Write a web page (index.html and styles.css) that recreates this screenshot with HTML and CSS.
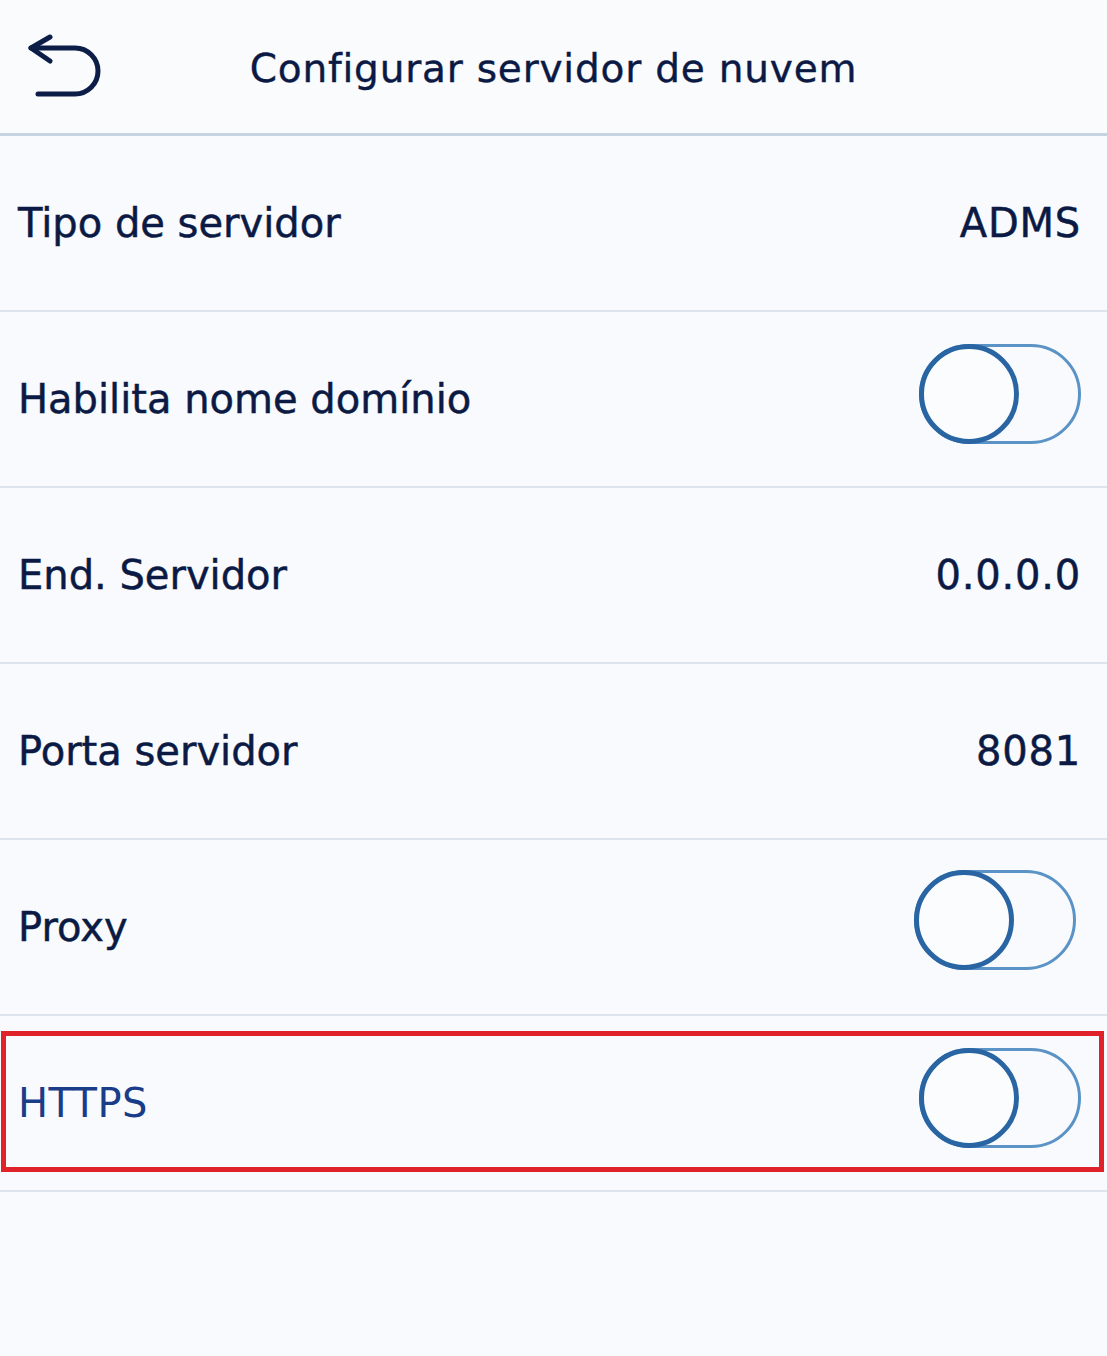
FILE: index.html
```html
<!DOCTYPE html>
<html lang="pt">
<head>
    <meta charset="UTF-8">
    <meta name="viewport" content="width=device-width, initial-scale=1.0">
    <title>Configurar servidor de nuvem</title>
    <link rel="stylesheet" href="styles.css">
</head>
<body>
    <!-- Title bar -->
    <div class="title-bar">
        <div class="back-btn">
            <svg width="74" height="66" viewBox="0 0 74 66">
                <path d="M22 3 L3 14 L22 27" fill="none" stroke="#0c1d48" stroke-width="5" stroke-linecap="round" stroke-linejoin="round"/>
                <path d="M3 14 H47 A23 23 0 0 1 47 60 H10" fill="none" stroke="#0c1d48" stroke-width="5" stroke-linecap="round"/>
            </svg>
        </div>
        <h1 class="title">Configurar servidor de nuvem</h1>
    </div>

    <!-- Settings list -->
    <div class="settings-list">
        <div class="setting-row">
            <span class="label">Tipo de servidor</span>
            <span class="value">ADMS</span>
        </div>
        <div class="setting-row">
            <span class="label">Habilita nome domínio</span>
            <span class="toggle"><span class="knob"></span></span>
        </div>
        <div class="setting-row">
            <span class="label">End. Servidor</span>
            <span class="value">0.0.0.0</span>
        </div>
        <div class="setting-row">
            <span class="label">Porta servidor</span>
            <span class="value">8081</span>
        </div>
        <div class="setting-row">
            <span class="label">Proxy</span>
            <span class="toggle shift-left"><span class="knob"></span></span>
        </div>
        <div class="setting-row highlighted">
            <span class="label light">HTTPS</span>
            <span class="toggle"><span class="knob"></span></span>
        </div>
    </div>
</body>
</html>
```

FILE: styles.css
```css
body {
    margin: 0;
    background-color: #f9fafd;
    color: #0b1a44;
    font-family: 'DejaVu Sans', Verdana, sans-serif;
    width: 1107px;
    height: 1356px;
    overflow: hidden;
}

.title-bar {
    position: relative;
    height: 133px;
    display: flex;
    align-items: center;
    justify-content: center;
    border-bottom: 3px solid #c6d3e3;
    background-color: #fafbfd;
}

.back-btn {
    position: absolute;
    left: 28px;
    top: 34px;
    line-height: 0;
}

.title {
    margin: 4px 0 0 0;
    font-size: 39px;
    font-weight: normal;
    letter-spacing: 0.8px;
    -webkit-text-stroke: 0.4px #0b1a44;
}

.setting-row {
    position: relative;
    height: 174px;
    display: flex;
    align-items: center;
    justify-content: space-between;
    padding: 0 26px 0 18px;
    border-bottom: 2px solid #dde4ee;
}

.label,
.value {
    font-size: 40px;
    -webkit-text-stroke: 0.5px #0b1a44;
}

.value {
    letter-spacing: 0.8px;
}

.label.light {
    color: #1a3d8a;
    letter-spacing: 0.4px;
    -webkit-text-stroke: 0;
}

/* Toggle switch, off state */
.toggle {
    position: relative;
    width: 156px;
    height: 94px;
    border: 3px solid #5b93c6;
    border-radius: 50px;
    margin-top: -10px;
}

.toggle.shift-left {
    margin-right: 5px;
    margin-top: -14px;
}

.knob {
    position: absolute;
    left: -3px;
    top: -3px;
    width: 90px;
    height: 90px;
    border: 5px solid #2a65a3;
    border-radius: 50%;
    background-color: #fbfcfe;
}

/* Red annotation frame */
.highlighted::after {
    content: '';
    position: absolute;
    left: 1px;
    right: 3px;
    top: 15px;
    bottom: 18px;
    border: 5px solid #e0222b;
}
```
